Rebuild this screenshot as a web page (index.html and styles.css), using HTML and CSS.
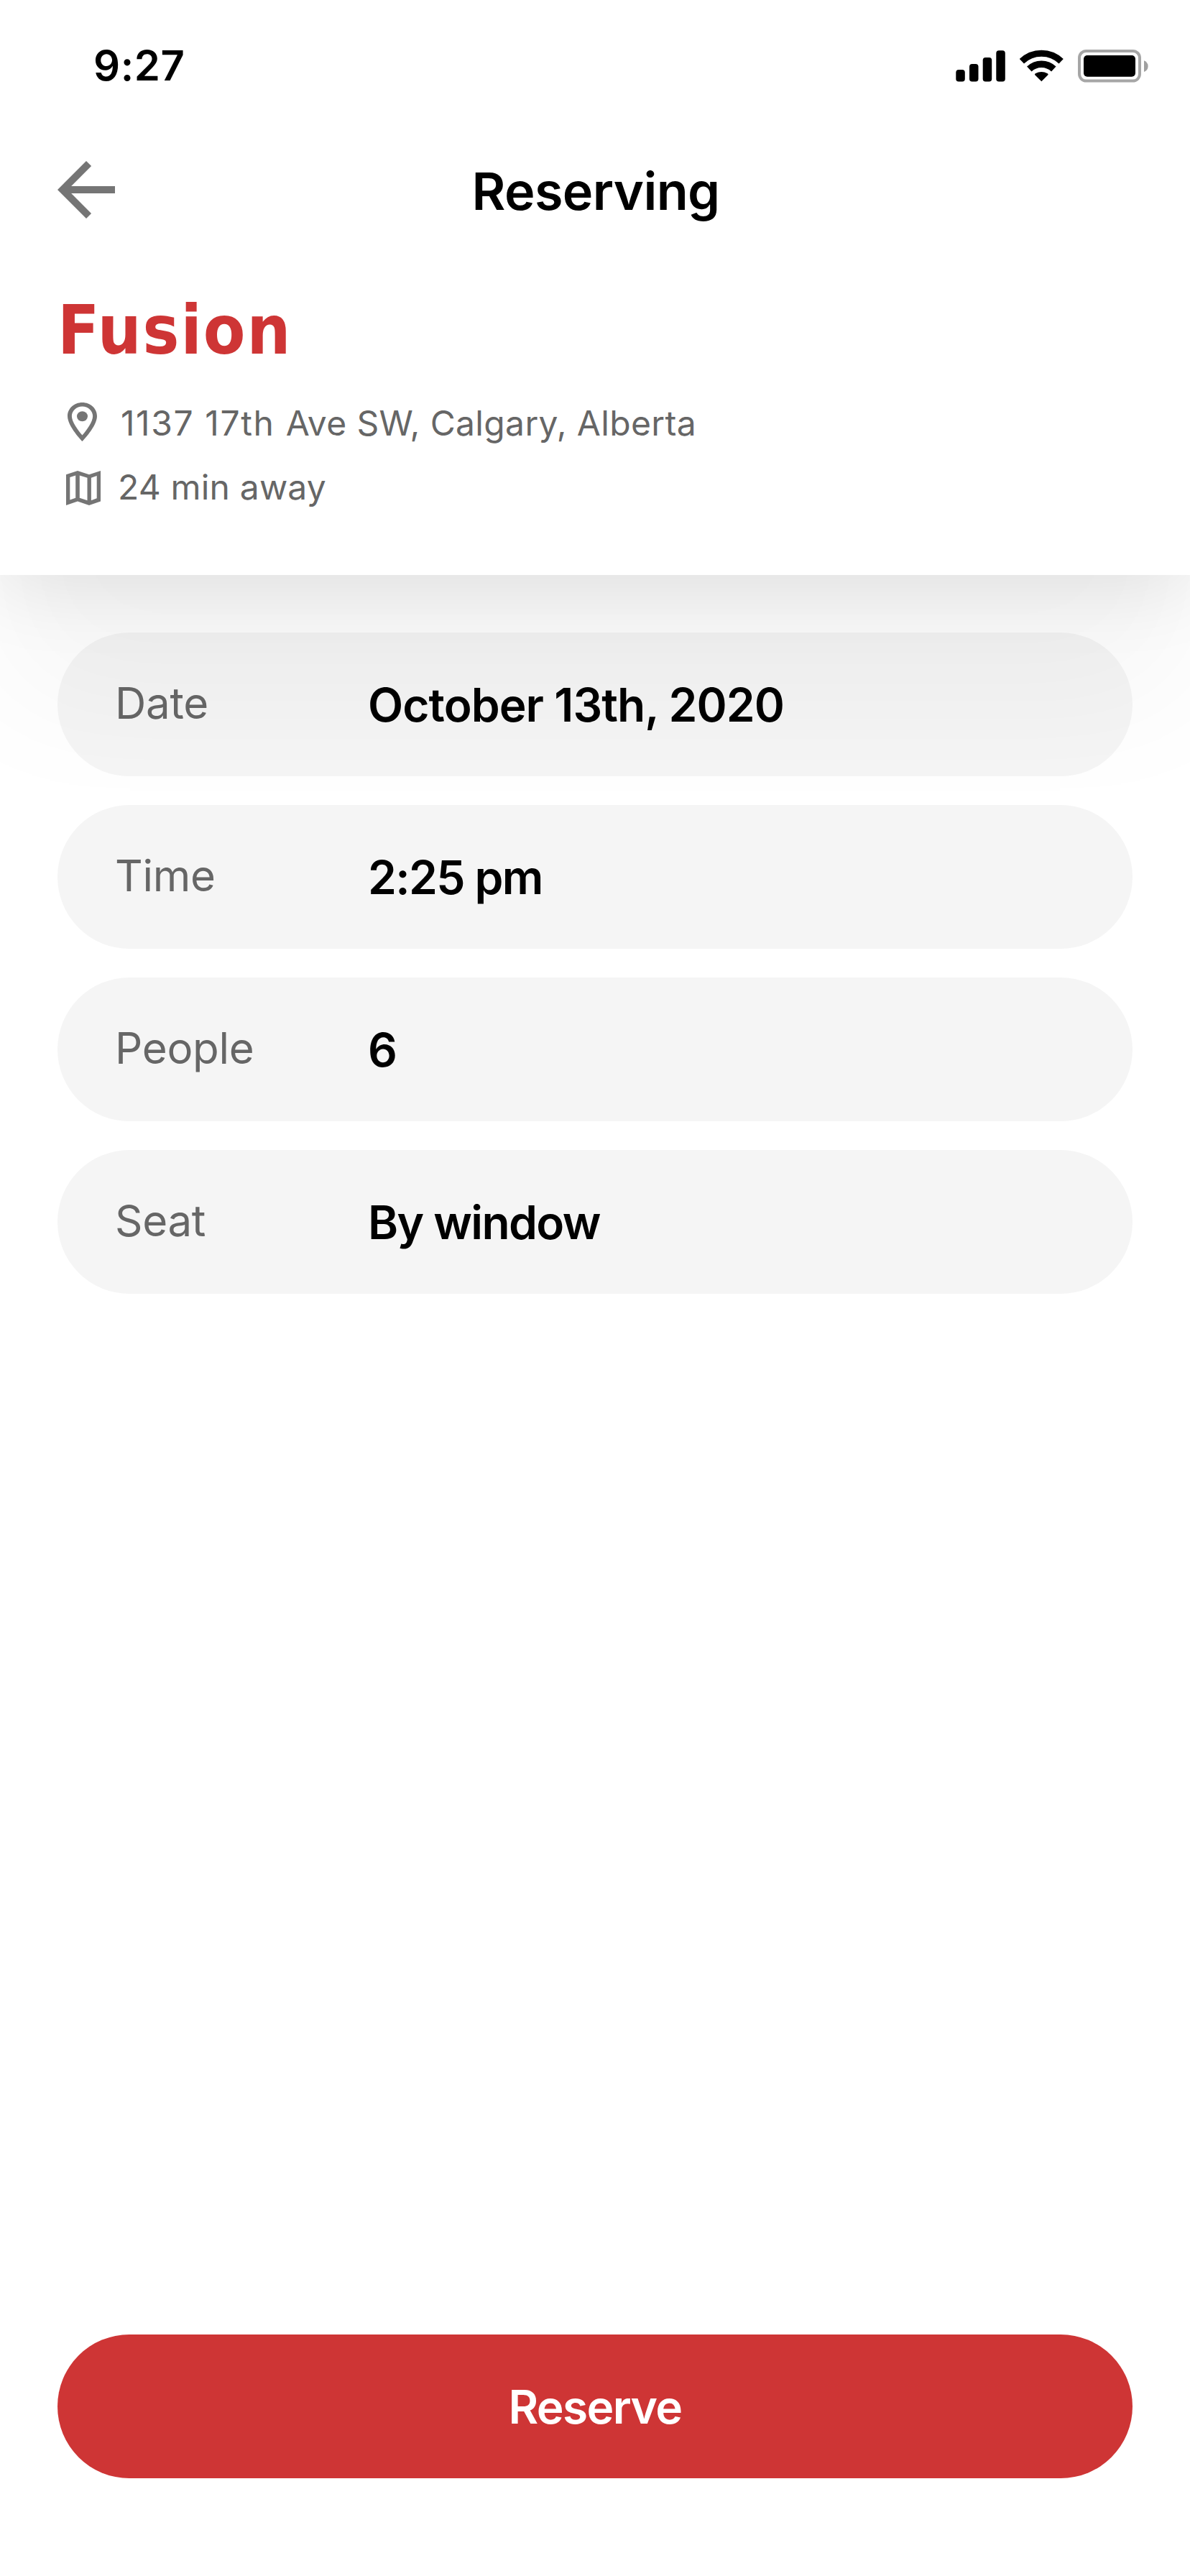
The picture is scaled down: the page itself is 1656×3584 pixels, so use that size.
FILE: index.html
```html
<!DOCTYPE html>
<html lang="en">
<head>
<meta charset="utf-8">
<title>Reserving</title>
<link rel="stylesheet" href="styles.css">
</head>
<body>
<div class="screen">
  <header class="header">
    <div class="status">
      <span class="status-time">9:27</span>
      <div class="status-icons">
        <svg class="signal" width="69" height="46" viewBox="0 0 69 46">
          <rect x="0.3" y="28" width="12.5" height="16.5" rx="3.8"/>
          <rect x="19" y="20" width="12.5" height="24.5" rx="3.8"/>
          <rect x="37.7" y="11" width="12.5" height="33.5" rx="3.8"/>
          <rect x="56.3" y="1.3" width="12.5" height="43.2" rx="3.8"/>
        </svg>
        <svg class="wifi" width="62" height="46" viewBox="0 0 62 46">
          <path class="wifi-arc" stroke-width="9" d="M2.9 16.2A39.6 39.6 0 0 1 57.7 16.2"/>
          <path class="wifi-arc" stroke-width="9.4" d="M13.3 27A24.6 24.6 0 0 1 47.3 27"/>
          <path d="M30.3 44.3L21 34.9Q20.8 33.9 21.8 33.3Q30.3 28.6 38.8 33.3Q39.8 33.9 39.6 34.9Z"/>
        </svg>
        <svg class="battery" width="98" height="46" viewBox="0 0 98 46">
          <rect class="battery-shell" x="2" y="2" width="84" height="41.6" rx="9.5"/>
          <rect x="8" y="8" width="72" height="29.7" rx="5"/>
          <path class="battery-cap" d="M92 15.3Q97.6 17.6 97.6 23.2T92 31Z"/>
        </svg>
      </div>
    </div>
    <div class="nav">
      <svg class="back" width="80" height="80" viewBox="4 4 16 16"><path d="M20 11H7.83l5.59-5.59L12 4l-8 8 8 8 1.41-1.41L7.83 13H20z"/></svg>
      <h1 class="nav-title">Reserving</h1>
    </div>
    <div class="place">
      <h2 class="place-name">Fusion</h2>
      <div class="place-line place-address">
        <svg class="pin" width="41" height="54" viewBox="5 2 14 20" preserveAspectRatio="none"><path fill-rule="evenodd" d="M12 2C8.13 2 5 5.13 5 9c0 5.25 7 13 7 13s7-7.75 7-13c0-3.87-3.13-7-7-7zM7 9c0-2.76 2.24-5 5-5s5 2.24 5 5c0 2.88-2.88 7.19-5 9.88C9.92 16.21 7 11.85 7 9z"/><ellipse cx="12" cy="9.1" rx="2.55" ry="2.6"/></svg>
        <span><span class="street-number">1137 17th </span>Ave SW, Calgary, Alberta</span>
      </div>
      <div class="place-line place-travel">
        <svg class="map" width="48" height="48" viewBox="0 0 48 48"><path fill-rule="evenodd" d="M0 5.3L16 0L32 5.3L48 0V42.4L32 48L16 42.4L0 48ZM5.3 9V40.4L13.2 37.7V6.4ZM18.8 6.4V37.8L29.5 41.3V9.8ZM34.9 9.7V41.2L42.7 38.2V6.9Z"/></svg>
        <span>24 min away</span>
      </div>
    </div>
  </header>
  <main class="fields">
    <div class="field"><span class="field-label">Date</span><span class="field-value field-date">October 13th, 2020</span></div>
    <div class="field"><span class="field-label">Time</span><span class="field-value">2:25 pm</span></div>
    <div class="field"><span class="field-label">People</span><span class="field-value">6</span></div>
    <div class="field"><span class="field-label">Seat</span><span class="field-value">By window</span></div>
  </main>
  <footer class="footer"><button class="reserve" type="button">Reserve</button></footer>
</div>
</body>
</html>
```
FILE: styles.css
```css
* { box-sizing: border-box; }

body {
  margin: 0;
  background: #fff;
  font-family: Inter, "Liberation Sans", sans-serif;
  color: #000;
}

svg { display: block; flex: none; }

.screen {
  display: flex;
  flex-direction: column;
  width: 1656px;
  height: 3584px;
  overflow: hidden;
}

/* The header's shadow falls across the first field */
.header {
  position: relative;
  z-index: 1;
  height: 800px;
  background: #fff;
  box-shadow: 0 20px 100px rgba(0, 0, 0, .09), 0 175px 185px rgba(0, 0, 0, .04);
}

.status {
  display: flex;
  align-items: center;
  justify-content: space-between;
  height: 184px;
  padding: 0 58px 0 130px;
}

.status-time {
  padding-bottom: 2px;
  font-size: 58px;
  font-weight: 600;
  letter-spacing: .6px;
}

.status-icons { display: flex; }
.wifi { margin-left: 20px; }
.wifi-arc { fill: none; stroke: #000; }
.battery { margin-left: 19px; }
.battery-shell { fill: none; stroke: #a6a6a6; stroke-width: 4; }
.battery-cap { fill: #a0a0a0; }

.nav {
  display: grid;
  grid-template-columns: 80px 1fr 80px;
  align-items: center;
  height: 160px;
  padding: 0 80px;
}

.back { fill: #757575; }

.nav-title {
  margin: 0;
  padding: 3px 0 0 2px;
  text-align: center;
  font-size: 72px;
  font-weight: 600;
  letter-spacing: -.64px;
}

.place { padding: 55px 80px 0; }

.place-name {
  margin: 0;
  font: bold 95px/120px "DejaVu Sans Condensed", "DejaVu Sans", sans-serif;
  font-stretch: condensed;
  letter-spacing: 2px;
  color: #ce3535;
}

.place-line {
  display: flex;
  align-items: flex-start;
  height: 58px;
  font-size: 48px;
  line-height: 58px;
  color: #666;
}

.place-line svg { fill: #757575; }
.place-address { margin-top: 41px; padding-left: 14px; gap: 33px; letter-spacing: .35px; }
.street-number { letter-spacing: 1.6px; }
.place-travel { margin-top: 31px; padding-left: 12px; gap: 24px; letter-spacing: .17px; }
.map { margin-top: 6px; }

.fields {
  display: flex;
  flex-direction: column;
  gap: 40px;
  padding: 80px 80px 0;
}

.field {
  display: grid;
  grid-template-columns: 352px 1fr;
  align-items: center;
  height: 200px;
  padding: 0 80px;
  border-radius: 100px;
  background: #f5f5f5;
}

.field-label {
  padding-bottom: 4px;
  font-size: 60px;
  letter-spacing: -.3px;
  color: #666;
}

.field-value {
  padding-top: 1px;
  font-size: 64px;
  font-weight: 600;
  letter-spacing: -1.6px;
}

.field-date { letter-spacing: -.93px; }

.footer { margin-top: auto; padding: 0 80px 136px; }

.reserve {
  display: block;
  width: 100%;
  height: 200px;
  padding: 1px 0 0;
  border: 0;
  border-radius: 100px;
  background: #ce3535;
  color: #fff;
  font: 600 64px Inter, "Liberation Sans", sans-serif;
  letter-spacing: -1.6px;
}
```
